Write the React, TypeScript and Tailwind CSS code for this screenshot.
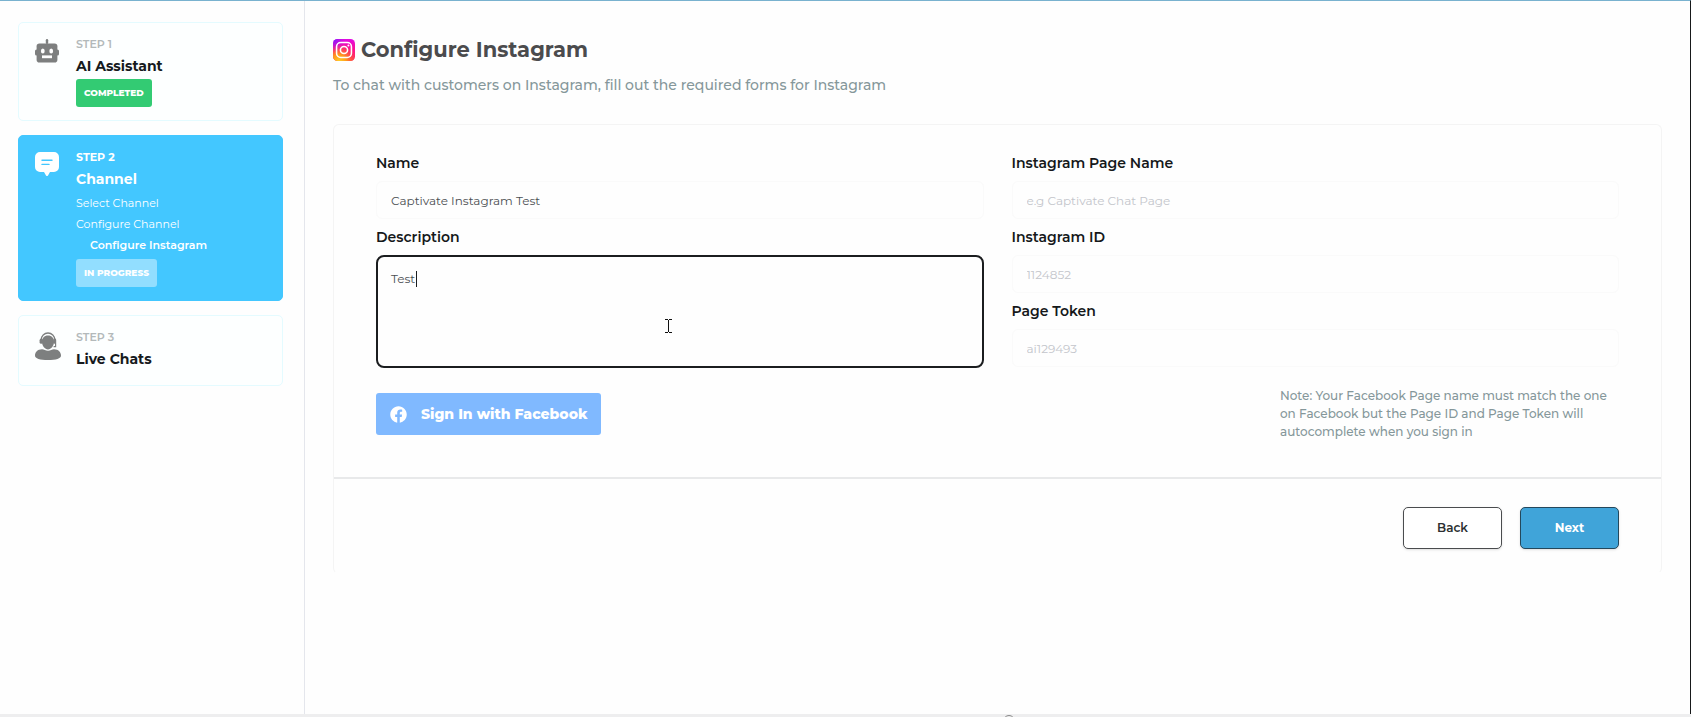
import { useId } from "react";
import type { ReactNode } from "react";
import { FaFacebook } from "react-icons/fa";

function RobotIcon() {
  return (
    <svg viewBox="0 0 24 24" className="h-6 w-6" fill="#7d7f7f" aria-hidden="true">
      <rect x="10.8" y="0" width="2.4" height="5" rx="1.2" />
      <rect x="0" y="10.5" width="3" height="6" rx="1.5" />
      <rect x="21" y="10.5" width="3" height="6" rx="1.5" />
      <rect x="1.6" y="4.4" width="20.8" height="19.2" rx="2.8" />
      <ellipse cx="7.8" cy="12" rx="1.9" ry="2.5" fill="#fff" />
      <ellipse cx="16.2" cy="12" rx="1.9" ry="2.5" fill="#fff" />
      <rect x="7" y="16.4" width="10" height="2.8" fill="#fff" />
    </svg>
  );
}

function MessageIcon() {
  return (
    <svg viewBox="0 0 24 24" className="h-6 w-6" aria-hidden="true">
      <path d="M5 0h14a5 5 0 0 1 5 5v10a5 5 0 0 1-5 5h-4l-2 3.4a1.2 1.2 0 0 1-2 0L9 20H5a5 5 0 0 1-5-5V5a5 5 0 0 1 5-5z" fill="#fff" />
      <path d="M7 8.2h10M7 12.4h7" stroke="#43c7ff" strokeWidth="1.4" strokeLinecap="round" />
    </svg>
  );
}

function AgentIcon() {
  return (
    <svg viewBox="0 0 26 28" className="h-7 w-6.5" fill="#7d7f7f" aria-hidden="true">
      <path d="M6.2 9.5V7.8a6.8 6.8 0 0 1 13.6 0v1.7" fill="none" stroke="#7d7f7f" strokeWidth="1.3" />
      <path d="M13 3.4c3.8 0 6 2.6 6 6.4 0 4.2-3 7.6-6 7.6s-6-3.4-6-7.6c0-3.8 2.2-6.4 6-6.4z" />
      <rect x="4.6" y="6.6" width="3.4" height="5.2" rx="1.6" />
      <rect x="18.2" y="6.6" width="3" height="5.2" rx="1.4" />
      <path d="M20.6 11v3.6h-2" fill="none" stroke="#7d7f7f" strokeWidth="1.2" />
      <path d="M7 17.2c2 0 3.5 1.6 6 1.6s4-1.6 6-1.6c4.5 0 7 3 7 6.3 0 3.3-5 4.5-13 4.5S0 26.8 0 23.5c0-3.3 2.5-6.3 7-6.3z" />
    </svg>
  );
}

function InstagramIcon() {
  return (
    <svg viewBox="0 0 24 24" className="h-5.5 w-5.5" aria-hidden="true">
      <defs>
        <linearGradient id="ig-base" x1="0.5" y1="0" x2="0.5" y2="1">
          <stop offset="0" stopColor="#e10be4" />
          <stop offset="0.5" stopColor="#ff0f8c" />
          <stop offset="1" stopColor="#ff2f5c" />
        </linearGradient>
        <radialGradient id="ig-warm" cx="0.27" cy="1.05" r="0.85">
          <stop offset="0" stopColor="#ffd428" />
          <stop offset="0.4" stopColor="#ff9a1c" />
          <stop offset="1" stopColor="#ff4a3c" stopOpacity="0" />
        </radialGradient>
        <radialGradient id="ig-cool" cx="0" cy="0" r="0.6">
          <stop offset="0" stopColor="#6a1cff" />
          <stop offset="1" stopColor="#c010f0" stopOpacity="0" />
        </radialGradient>
      </defs>
      <rect width="24" height="24" rx="5" fill="url(#ig-base)" />
      <rect width="24" height="24" rx="5" fill="url(#ig-warm)" />
      <rect width="24" height="24" rx="5" fill="url(#ig-cool)" />
      <g fill="none" stroke="#fff" strokeWidth="1.7">
        <rect x="3.9" y="3.9" width="16.2" height="16.2" rx="4.6" />
        <circle cx="12" cy="12" r="3.9" />
      </g>
      <circle cx="16.8" cy="7.2" r="1.1" fill="#fff" />
    </svg>
  );
}

function Badge({ tone, children }: { tone: "done" | "progress"; children: ReactNode }) {
  const color = tone === "done" ? "bg-[#33cb73]" : "bg-[#92deff]";
  return (
    <span className={`inline-flex h-7 items-center rounded-[3px] px-2 text-[9px] font-extrabold text-white ${color}`}>
      {children}
    </span>
  );
}

function StepCard({ icon, step, title, active = false, children }: {
  icon: ReactNode;
  step: string;
  title: string;
  active?: boolean;
  children?: ReactNode;
}) {
  return (
    <li
      className={`flex gap-[15px] rounded-[5px] border px-4 pt-3 pb-[13px] ${
        active ? "border-[#43c7ff] bg-[#43c7ff] text-white" : "border-[#e4fbff] bg-[#fdffff] text-[#161a1d]"
      }`}
    >
      <span className="flex w-6.5 shrink-0 pt-1">{icon}</span>
      <div className="flex flex-col items-start">
        <span className={`text-[11px] leading-[18px] ${active ? "font-bold" : "font-semibold text-[#b3b9ba]"}`}>{step}</span>
        <h2 className="text-sm leading-[26px] font-bold">{title}</h2>
        {children}
      </div>
    </li>
  );
}

function Field({ label, placeholder, value }: { label: string; placeholder?: string; value?: string }) {
  const id = useId();
  return (
    <div className="flex flex-col">
      <label htmlFor={id} className="text-sm leading-5 font-semibold text-[#15181a]">{label}</label>
      <input
        id={id}
        type="text"
        defaultValue={value}
        placeholder={placeholder}
        className="mt-2 mb-2 h-[38px] w-full rounded-md border border-[#fafafa] px-3.5 text-xs text-[#4b4f52] outline-none placeholder:text-[#c3c5cb]"
      />
    </div>
  );
}

export default function App() {
  return (
    <div className="flex min-h-screen flex-col bg-[#fefefe] font-['Montserrat','Inter',sans-serif]">
      <div className="flex flex-1 border-t border-r border-t-[#79b2cf] border-r-[#17191a]">
        <aside className="w-[305px] shrink-0 border-r border-[#e4e6ec] py-[21px] pr-[21px] pl-[18px]">
          <ol className="flex flex-col gap-3.5">
            <StepCard icon={<RobotIcon />} step="STEP 1" title="AI Assistant">
              <Badge tone="done">COMPLETED</Badge>
            </StepCard>
            <StepCard icon={<MessageIcon />} step="STEP 2" title="Channel" active>
              <ul className="pt-px pb-[3px] text-[11px] leading-[21px]">
                <li>Select Channel</li>
                <li>Configure Channel</li>
                <li className="pl-3.5 font-semibold">Configure Instagram</li>
              </ul>
              <Badge tone="progress">IN PROGRESS</Badge>
            </StepCard>
            <StepCard icon={<AgentIcon />} step="STEP 3" title="Live Chats" />
          </ol>
        </aside>

        <main className="min-w-0 flex-1 pt-[34px] pr-7 pl-7">
          <h1 className="flex items-center gap-1.5 text-[21px] leading-[30px] font-bold text-[#4b4b4d]">
            <InstagramIcon />
            Configure Instagram
          </h1>
          <p className="mt-2.5 text-sm leading-5 font-medium text-[#85979a]">
            To chat with customers on Instagram, fill out the required forms for Instagram
          </p>

          <form className="mt-[29px] rounded-md border border-[#f4f4f4] border-b-transparent" onSubmit={(e) => e.preventDefault()}>
            <div className="grid grid-cols-2 gap-x-7 px-[42px] pt-7 pb-9">
              <div className="flex flex-col">
                <Field label="Name" value="Captivate Instagram Test" />
                <label htmlFor="description" className="text-sm leading-5 font-semibold text-[#15181a]">Description</label>
                <div className="relative mt-2 flex">
                  <textarea
                    id="description"
                    defaultValue="Test"
                    className="h-[113px] w-full resize-none rounded-lg border-2 border-[#1b1d1f] px-[13px] py-3.5 text-xs leading-4 text-[#4b4f52] outline-none"
                  />
                  <span className="pointer-events-none absolute top-4 left-10 h-4 w-px bg-[#1b1d1f]" />
                  <svg viewBox="0 0 7 14" className="pointer-events-none absolute top-16 left-[289px] h-3.5 w-[7px]" fill="none" stroke="#111" aria-hidden="true">
                    <path d="M0 .5h3M4 .5h3M3.5 1v12M0 13.5h3M4 13.5h3" />
                  </svg>
                </div>
              </div>
              <div className="flex flex-col">
                <Field label="Instagram Page Name" placeholder="e.g Captivate Chat Page" />
                <Field label="Instagram ID" placeholder="1124852" />
                <Field label="Page Token" placeholder="ai129493" />
              </div>
              <div className="col-span-2 mt-3 flex items-start justify-between">
                <button type="button" className="mt-1.5 flex h-[42px] items-center gap-3.5 rounded-[3px] bg-[#80b9ff] px-3.5 text-sm font-extrabold text-white">
                  <FaFacebook className="h-[17px] w-[17px]" />
                  Sign In with Facebook
                </button>
                <p className="w-[339px] text-xs leading-[18px] font-medium text-[#85979a]">
                  Note: Your Facebook Page name must match the one on Facebook but the Page ID and Page Token will autocomplete when you sign in
                </p>
              </div>
            </div>
            <div className="flex justify-end gap-[18px] border-t-2 border-[#e8e9ea] px-[42px] pt-7 pb-6">
              <button type="button" className="h-[42px] w-[99px] rounded-[5px] border border-[#4a4c4e] bg-white text-xs font-semibold text-[#2c2f31] shadow-sm">Back</button>
              <button type="submit" className="h-[42px] w-[99px] rounded-[5px] border border-[#24485c] bg-[#40a4d9] text-xs font-bold text-white shadow-sm">Next</button>
            </div>
          </form>
        </main>
      </div>
      <footer className="relative h-[3px] overflow-hidden bg-[#eeeeef]">
        <span className="absolute top-px left-[1003px] h-3 w-3 rounded-full border border-[#8a8a8a]" />
      </footer>
    </div>
  );
}
